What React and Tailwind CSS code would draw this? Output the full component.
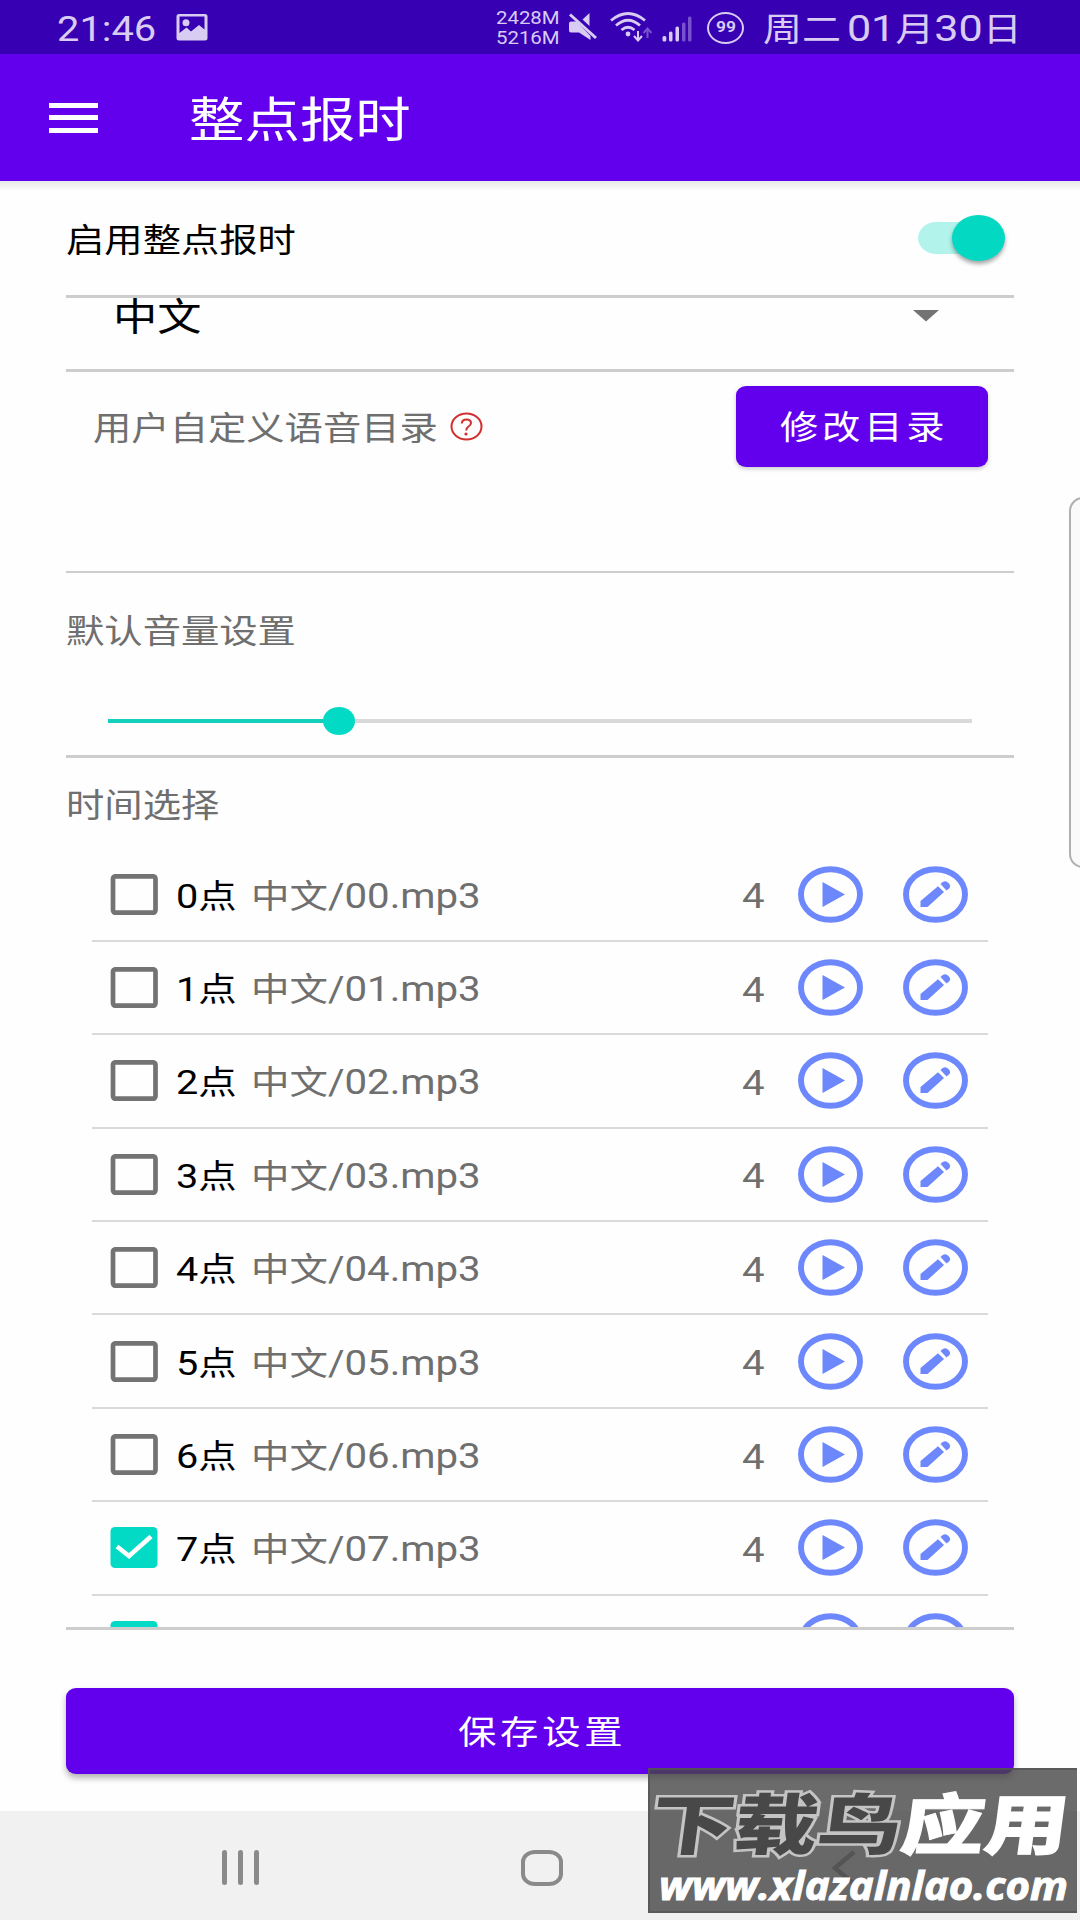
import React, { useState } from "react";

const hours = [0, 1, 2, 3, 4, 5, 6, 7, 8];

// Text that is wider than it is tall, like the rest of the screen
const Wide = ({ children, className = "" }) => (
  <span
    className={`inline-block origin-left scale-x-[1.165] whitespace-nowrap ${className}`}
  >
    {children}
  </span>
);

const StatusBar = () => (
  <div className="h-[54px] bg-[#3700b3] text-[#d9ccf3] flex items-center">
    <Wide className="ml-[57px] pt-[4px] w-[119px] text-[34.2px] leading-none">
      21:46
    </Wide>
    <svg width="32" height="27" viewBox="0 0 32 27" className="shrink-0">
      <path
        fill="currentColor"
        fillRule="evenodd"
        d="M3 0h26a2.5 2.5 0 0 1 2.5 2.5v21.5a2.5 2.5 0 0 1-2.5 2.5H3a2.5 2.5 0 0 1-2.5-2.5V2.5A2.5 2.5 0 0 1 3 0zM3.5 2.5v16.500l7-5.500 4.500 4 8-6.500 5.500 4.500V2.500z"
      />
      <circle cx="10" cy="8.7" r="3.5" fill="currentColor" />
    </svg>
    <div className="ml-[288px] pt-[2px] w-[72px] text-[17.5px] leading-[20.5px]">
      <Wide className="block">2428M</Wide>
      <Wide className="block">5216M</Wide>
    </div>
    <svg width="30" height="30" viewBox="0 0 30 30" className="shrink-0">
      <path
        fill="currentColor"
        d="M1 11.5Q1 9.5 3 9.5H8.5L22.5 24V28L11 20.5H3Q1 20.5 1 18.5zM14.5 7.5 21.5 1V14z"
      />
      <path d="M2 2.5 28 26" stroke="currentColor" strokeWidth="3" />
    </svg>
    <svg
      width="43"
      height="30"
      viewBox="0 0 43 30"
      fill="none"
      stroke="currentColor"
      className="ml-[12px] shrink-0"
    >
      <path d="M1 8.5Q18 -5.5 35 8.5" strokeWidth="2.8" />
      <path d="M6 13.5Q18 3 30 13.5" strokeWidth="2.8" />
      <path d="M11.5 18Q18 12.5 24.5 18" strokeWidth="2.8" />
      <circle cx="18" cy="22" r="2.4" fill="currentColor" stroke="none" />
      <path d="M28 19V28M24 24 28 28.5 32 24" strokeWidth="2" />
      <path
        d="M37.5 26V17M33.5 21 37.5 16.5 41.5 21"
        strokeWidth="2"
        opacity="0.4"
      />
    </svg>
    <svg
      width="30"
      height="26"
      viewBox="0 0 30 26"
      fill="currentColor"
      className="ml-[9px] mt-[4px] shrink-0"
    >
      <rect x="0.5" y="20" width="3.8" height="5.5" rx="1.5" />
      <rect x="7" y="15.5" width="3.5" height="10" rx="1.5" />
      <rect x="13.5" y="10.5" width="3.5" height="15" rx="1.5" />
      <rect x="20" y="6.5" width="3.5" height="19" rx="1.5" opacity="0.4" />
      <rect x="26" y="0.5" width="3.5" height="25" rx="1.5" opacity="0.4" />
    </svg>
    <div className="ml-[15px] mt-px w-[37px] h-[32px] shrink-0 rounded-[50%] border-2 border-[#d9ccf3] flex items-center justify-center text-[15.5px] font-bold leading-none">
      <span className="scale-x-[1.12]">99</span>
    </div>
    <Wide className="ml-[19px] pt-[3px] text-[33.5px] leading-none">
      周二<span className="text-[37px] ml-[5px]">01</span>月
      <span className="text-[37px]">30</span>日
    </Wide>
  </div>
);

const Divider = () => <div className="h-[2.5px] shrink-0 bg-[#cdcdcd]" />;

const CheckBox = ({ checked, onClick }) => (
  <button onClick={onClick} className="ml-[18px] block shrink-0">
    <svg width="48" height="41" viewBox="0 0 48 41">
      {checked ? (
        <>
          <rect x="0.5" width="47" height="41" rx="4.5" fill="#03dac5" />
          <path
            d="M7 19.5 19 29 41 9.5"
            fill="none"
            stroke="#fff"
            strokeWidth="4.5"
          />
        </>
      ) : (
        <rect
          x="3"
          y="2.3"
          width="42.5"
          height="36.4"
          rx="2.5"
          fill="none"
          stroke="#737373"
          strokeWidth="4.7"
        />
      )}
    </svg>
  </button>
);

const RoundIcon = ({ children, className = "" }) => (
  <svg
    width="65"
    height="57"
    viewBox="0 0 65 57"
    fill="#6d88fc"
    className={`shrink-0 ${className}`}
  >
    <ellipse
      cx="32.5"
      cy="28.5"
      rx="29.5"
      ry="25.3"
      fill="none"
      stroke="#6d88fc"
      strokeWidth="5.9"
    />
    {children}
  </svg>
);

const HourRow = ({ hour, checked, peek, onToggle }) => (
  <div className="h-[93.4px] shrink-0 border-b-2 border-[#dadada] flex items-center text-[33px] leading-[40px]">
    <CheckBox checked={checked} onClick={onToggle} />
    <Wide className="ml-[18px] pt-[4px] w-[75px] text-black">
      {!peek && (
        <>
          <span className="text-[34px]">{hour}</span>点
        </>
      )}
    </Wide>
    <Wide className="pt-[4px] w-[491px] text-[#6f6f6f]">
      {!peek && (
        <>
          中文<span className="text-[34.5px]">/0{hour}.mp3</span>
        </>
      )}
    </Wide>
    <Wide className="pt-[4px] w-[56px] text-[34.5px] text-[#6f6f6f]">
      {!peek && 4}
    </Wide>
    <RoundIcon>
      <path d="M24.5 16 47 28.5 24.5 41z" />
    </RoundIcon>
    <RoundIcon className="ml-[40px]">
      <path d="M17.5 35 35 20.3 41 26 24.5 41H17.5z" />
      <path d="M37.5 18 39.5 16.3Q42.5 14 45.5 17Q48.5 20 46 22.5L43.5 24.5z" />
    </RoundIcon>
  </div>
);

const Watermark = () => (
  <div className="absolute left-[648px] top-[1768px] w-[429px] h-[145px] bg-[#464646]/80 border-2 border-[#555]/80 border-r-0">
    <div className="absolute left-[1px] top-[17px] flex origin-left scale-x-[1.265] -skew-x-6 text-[66px] leading-[80px] font-black whitespace-nowrap text-[#484848]">
      <span className="[-webkit-text-stroke:5px_#c4c4c4] [paint-order:stroke_fill]">
        下载鸟
      </span>
      <span className="text-white [-webkit-text-stroke:1px_#fff]">应用</span>
    </div>
    <div className="absolute left-[9px] top-[91px] origin-left scale-x-[1.075] font-['Open_Sans','Noto_Sans',sans-serif] text-[39px] leading-[48px] font-bold italic text-white whitespace-nowrap [-webkit-text-stroke:1px_#fff]">
      www.xlazalnlao.com
    </div>
  </div>
);

const App = () => {
  const [enabled, setEnabled] = useState(true);
  const [selected, setSelected] = useState([7, 8]);
  const [volume] = useState(26.7);

  const toggleHour = (hour) => {
    setSelected(
      selected.includes(hour)
        ? selected.filter((item) => item !== hour)
        : [...selected, hour]
    );
  };

  return (
    <div className="relative w-[1080px] h-[1920px] overflow-hidden flex flex-col bg-[#fefefe] font-['Roboto','Noto_Sans_CJK_SC',sans-serif]">
      <StatusBar />
      <header className="h-[127px] shrink-0 bg-[#6200ee] text-white flex items-center">
        <div className="ml-[49px] w-[49px] flex flex-col gap-[7.5px]">
          <div className="h-[5px] bg-white" />
          <div className="h-[5px] bg-white" />
          <div className="h-[5px] bg-white" />
        </div>
        <Wide className="ml-[91px] pt-[8px] text-[47.6px] leading-none">
          整点报时
        </Wide>
      </header>
      <div className="h-[10px] -mb-[10px] shrink-0 bg-linear-to-b from-[#e8e8e8] to-transparent" />

      <main className="px-[66px] h-[1630px] shrink-0 flex flex-col text-[32.9px] leading-none">
        <div className="h-[114px] shrink-0 flex items-center justify-between">
          <Wide className="pt-[6px] text-black">启用整点报时</Wide>
          <button
            onClick={() => setEnabled(!enabled)}
            className="relative mr-[9px] w-[87px] h-[46px] flex items-center"
          >
            <span className="w-[66px] h-[32px] rounded-[18px/16px] bg-[#b2f4ec]" />
            <span
              className={`absolute top-0 w-[53px] h-[46px] rounded-[50%] bg-[#03d8c3] shadow-[0_3px_4px_rgba(0,0,0,0.35)] ${
                enabled ? "right-0" : "left-0"
              }`}
            />
          </button>
        </div>
        <Divider />
        <div className="h-[71.5px] shrink-0 flex items-start justify-between">
          <Wide className="ml-[47px] text-[38px] text-black">中文</Wide>
          <svg width="26" height="12" className="mt-[12px] mr-[75px]">
            <path d="M0 0H26L13 11.5z" fill="#737373" />
          </svg>
        </div>
        <Divider />
        <div className="h-[199px] shrink-0 pt-[14px] px-[26px] flex items-start">
          <div className="h-[82px] flex items-center text-[#6f6f6f]">
            <Wide className="w-[357px] pt-[5px] ml-px">
              用户自定义语音目录
            </Wide>
            <svg
              width="33"
              height="29"
              viewBox="0 0 33 29"
              fill="none"
              stroke="#d32f2f"
            >
              <ellipse cx="16.5" cy="14.5" rx="15" ry="13" strokeWidth="2" />
              <path
                d="M11.8 11.5Q12 7.5 16.5 7.5Q21 7.5 21 11Q21 13 18.5 14.5Q16.3 16 16.3 18.5"
                strokeWidth="2"
              />
              <circle cx="16" cy="22" r="1.6" fill="#d32f2f" stroke="none" />
            </svg>
          </div>
          <button className="ml-auto w-[252px] h-[81px] rounded-[10px/9px] bg-[#6200ee] text-white text-left shadow-[0_2px_4px_rgba(0,0,0,0.2)]">
            <Wide className="ml-[44px] pt-[4px] tracking-[3.25px]">
              修改目录
            </Wide>
          </button>
        </div>
        <Divider />
        <div className="h-[182px] shrink-0 pt-[43px]">
          <Wide className="block text-[#6f6f6f]">默认音量设置</Wide>
          <div className="relative mt-[70px] ml-[42px] w-[864px] h-[4px] bg-[#d9d9d9]">
            <div
              className="h-full bg-[#14cfbc]"
              style={{ width: `${volume}%` }}
            />
            <div
              className="absolute -top-[12px] -ml-[16px] w-[32px] h-[28px] rounded-[50%] bg-[#03dac5]"
              style={{ left: `${volume}%` }}
            />
          </div>
        </div>
        <Divider />
        <div className="h-[91px] shrink-0 pt-[32px]">
          <Wide className="text-[#6f6f6f]">时间选择</Wide>
        </div>
        <div className="h-[778.5px] shrink-0 mx-[26px] overflow-hidden flex flex-col">
          {hours.map((hour) => (
            <HourRow
              key={hour}
              hour={hour}
              peek={hour === 8}
              checked={selected.includes(hour)}
              onToggle={() => toggleHour(hour)}
            />
          ))}
        </div>
        <Divider />
        <button className="mt-[58px] h-[86px] shrink-0 rounded-[10px/9px] bg-[#6200ee] text-white text-left shadow-[0_4px_6px_rgba(0,0,0,0.3)]">
          <Wide className="ml-[392px] pt-[5px] tracking-[3.25px]">
            保存设置
          </Wide>
        </button>
      </main>

      {/* system navigation */}
      <nav className="h-[109px] shrink-0 bg-[#f1f1f1] flex items-center pt-[4px]">
        <div className="ml-[222px] w-[37px] flex justify-between">
          <div className="w-[5px] h-[35px] rounded-full bg-[#8a8a8a]" />
          <div className="w-[5px] h-[35px] rounded-full bg-[#8a8a8a]" />
          <div className="w-[5px] h-[35px] rounded-full bg-[#8a8a8a]" />
        </div>
        <div className="ml-[262px] w-[42px] h-[36px] rounded-[14px/12px] border-[4.5px] border-[#8a8a8a]" />
        <svg width="24" height="36" viewBox="0 0 24 36" className="ml-[269px]">
          <path
            d="M22 2 3 18 22 34"
            fill="none"
            stroke="#8a8a8a"
            strokeWidth="4.5"
          />
        </svg>
      </nav>

      {/* edge panel handle */}
      <div className="absolute left-[1069px] top-[497px] w-[30px] h-[371px] rounded-[14px] border-2 border-[#b0b0b0] bg-[#fafafa]" />
      <Watermark />
    </div>
  );
};

export default App;
